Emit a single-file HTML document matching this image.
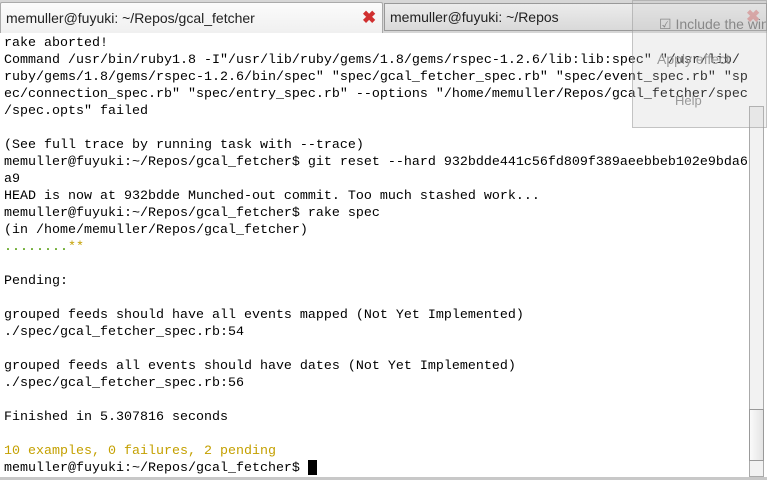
<!DOCTYPE html>
<html><head><style>
body{margin:0;width:767px;height:480px;overflow:hidden;background:#fff;position:relative;font-family:"Liberation Sans",sans-serif}
.tabbar{position:absolute;left:0;top:0;width:767px;height:33px;background:#d6d6d6}
.t1{position:absolute;left:0;top:2px;width:383px;height:31px;background:linear-gradient(#fbfbfb,#f0f0f0);border:1px solid #aaa;border-bottom:none;box-sizing:border-box;border-radius:2px 2px 0 0}
.t2{position:absolute;left:384px;top:3px;width:383px;height:28px;background:linear-gradient(#ececec,#d9d9d9);border:1px solid #999;box-sizing:border-box}
.tl{position:absolute;top:7px;font-size:14px;color:#222;white-space:nowrap}
.x{position:absolute;color:#d03030;font-size:17px;font-weight:bold;top:5px}
.term{position:absolute;left:4px;top:35px;font-family:"Liberation Mono",monospace;font-size:13.33px;line-height:17px;color:#000;white-space:pre}
.g{color:#4e9a06}.y{color:#c4a000}
.sb{position:absolute;left:749px;top:106px;width:15px;height:371px;background:#f2f2f2;border:1px solid #aaa;box-sizing:border-box}
.thumb{position:absolute;left:749px;top:409px;width:15px;height:52px;background:linear-gradient(90deg,#fafafa,#e4e4e4);border:1px solid #999;box-sizing:border-box}
.ov{position:absolute;left:632px;top:0;width:135px;height:128px;background:rgba(200,200,200,0.25);border:1px solid rgba(150,150,150,0.5);box-sizing:border-box;overflow:hidden}
.ov span{white-space:nowrap;position:absolute}
.cur{position:absolute;left:308px;top:460px;width:9px;height:15px;background:#000}
</style></head><body>
<div class="tabbar"></div>
<div class="t1"><span class="tl" style="left:5px">memuller@fuyuki: ~/Repos/gcal_fetcher</span><span class="x" style="left:361px">✖</span></div>
<div class="t2"><span class="tl" style="left:5px;top:5px">memuller@fuyuki: ~/Repos</span><span class="x" style="left:361px;top:3px;opacity:.4">✖</span></div>
<div class="term">rake aborted!
Command /usr/bin/ruby1.8 -I"/usr/lib/ruby/gems/1.8/gems/rspec-1.2.6/lib:lib:spec" "/usr/lib/
ruby/gems/1.8/gems/rspec-1.2.6/bin/spec" "spec/gcal_fetcher_spec.rb" "spec/event_spec.rb" "sp
ec/connection_spec.rb" "spec/entry_spec.rb" --options "/home/memuller/Repos/gcal_fetcher/spec
/spec.opts" failed

(See full trace by running task with --trace)
memuller@fuyuki:~/Repos/gcal_fetcher$ git reset --hard 932bdde441c56fd809f389aeebbeb102e9bda6
a9
HEAD is now at 932bdde Munched-out commit. Too much stashed work...
memuller@fuyuki:~/Repos/gcal_fetcher$ rake spec
(in /home/memuller/Repos/gcal_fetcher)
<span class="g">........</span><span class="y">**</span>

Pending:

grouped feeds should have all events mapped (Not Yet Implemented)
./spec/gcal_fetcher_spec.rb:54

grouped feeds all events should have dates (Not Yet Implemented)
./spec/gcal_fetcher_spec.rb:56

Finished in 5.307816 seconds

<span class="y">10 examples, 0 failures, 2 pending</span>
memuller@fuyuki:~/Repos/gcal_fetcher$ </div>
<div class="cur"></div>
<div class="sb"></div><div class="thumb"></div>
<div style="position:absolute;left:0;top:477px;width:767px;height:3px;background:#c8c8c8"></div>
<div class="ov"><span style="left:26px;top:15px;font-size:14px;color:#888">☑ Include the win</span><span style="left:24px;top:50px;font-size:14px;color:#999">Apply effect</span><span style="left:42px;top:92px;font-size:13px;color:#999">Help</span></div>
</body></html>
